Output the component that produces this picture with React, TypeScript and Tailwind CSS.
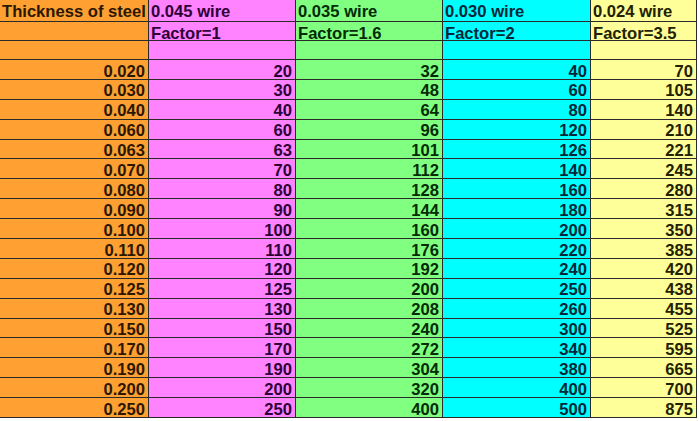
const rows: [string, number, number, number, number][] = [
  ['0.020', 20, 32, 40, 70],
  ['0.030', 30, 48, 60, 105],
  ['0.040', 40, 64, 80, 140],
  ['0.060', 60, 96, 120, 210],
  ['0.063', 63, 101, 126, 221],
  ['0.070', 70, 112, 140, 245],
  ['0.080', 80, 128, 160, 280],
  ['0.090', 90, 144, 180, 315],
  ['0.100', 100, 160, 200, 350],
  ['0.110', 110, 176, 220, 385],
  ['0.120', 120, 192, 240, 420],
  ['0.125', 125, 200, 250, 438],
  ['0.130', 130, 208, 260, 455],
  ['0.150', 150, 240, 300, 525],
  ['0.170', 170, 272, 340, 595],
  ['0.190', 190, 304, 380, 665],
  ['0.200', 200, 320, 400, 700],
  ['0.250', 250, 400, 500, 875],
]

// one colour per column, text tinted a little like the original
const cols = [
  'bg-[#ffa033] text-[#2b1800]',
  'bg-[#ff82ff] text-[#2e0038]',
  'bg-[#80ff80] text-[#052b05]',
  'bg-[#00ffff] text-[#00283a]',
  'bg-[#ffff99] text-[#222200]',
]

const grid = 'grid grid-cols-[149px_147px_147px_148px_106px]'
const cell = 'border-r border-b border-[#2a2a2a] px-[3px] pt-[3.5px] leading-[16px] whitespace-nowrap overflow-hidden'

function Row({ cells, h, align }: { cells: string[]; h: string; align: 'left' | 'right' }) {
  return (
    <div className={`${grid} ${h}`}>
      {cells.map((c, i) => (
        <div key={i} className={`${cell} ${cols[i]} ${align === 'right' ? 'text-right' : 'text-left pl-[2px]'}`}>
          {c}
        </div>
      ))}
    </div>
  )
}

export default function App() {
  return (
    <div className="w-[699px] h-[421px] bg-white overflow-hidden font-['Liberation_Sans',Arial,sans-serif] font-bold text-[16.6px]">
      <Row h="h-[22px]" align="left" cells={['Thickness of steel', '0.045 wire', '0.035 wire', '0.030 wire', '0.024 wire']} />
      <Row h="h-[19px]" align="left" cells={['', 'Factor=1', 'Factor=1.6', 'Factor=2', 'Factor=3.5']} />
      <Row h="h-[19px]" align="left" cells={['', '', '', '', '']} />
      {rows.map((r) => (
        <Row key={r[0]} h="h-[19.9px]" align="right" cells={r.map(String)} />
      ))}
    </div>
  )
}
